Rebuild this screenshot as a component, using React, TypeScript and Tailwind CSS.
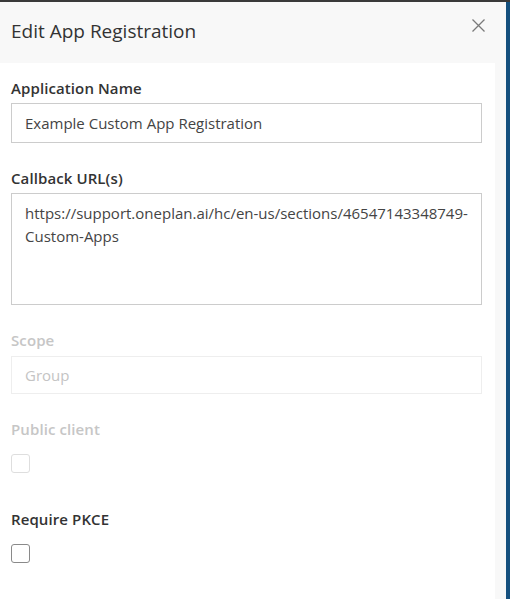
import React from "react";

const font = { fontFamily: '"Open Sans", "Noto Sans", sans-serif' };

function Label({ children, disabled }: { children: React.ReactNode; disabled?: boolean }) {
  return (
    <div
      className={`text-[15px] font-semibold leading-[20px] tracking-[0.1px] ${disabled ? "text-[#c6c6c6]" : "text-[#333333]"}`}
    >
      {children}
    </div>
  );
}

function Checkbox({ disabled }: { disabled?: boolean }) {
  return (
    <div
      className={`w-[19px] h-[19px] rounded-[3px] border-[1.5px] bg-white ${disabled ? "border-[#dedede]" : "border-[#8a8a8a]"}`}
    />
  );
}

export default function App() {
  return (
    <div className="w-[510px] h-[599px] bg-[#3a3a3a] pt-[2px] overflow-hidden" style={font}>
      <div className="flex h-full">
        <div className="flex-1 bg-[#f8f8f8] flex flex-col">
          <div className="h-[61px] flex items-start justify-between pl-[11px] pr-[21px]">
            <h1 className="text-[19px] text-[#333333] mt-[16px] leading-[26px]">
              Edit App Registration
            </h1>
            <button className="mt-[17px] text-[#7a7a7a]" aria-label="Close">
              <svg width="13" height="13" viewBox="0 0 13 13" fill="none" stroke="currentColor" strokeWidth="1.3">
                <path d="M0.5 0.5 L12.5 12.5 M12.5 0.5 L0.5 12.5" />
              </svg>
            </button>
          </div>
          <div className="flex-1 flex">
            <div className="w-[495px] bg-white pl-[11px] pr-[13px] pt-[15px] flex flex-col">
              <Label>Application Name</Label>
              <div className="mt-[5px] h-[40px] border border-[#cccccc] flex items-center px-[13px] text-[15px] text-[#444444]">
                Example Custom App Registration
              </div>

              <div className="mt-[25px]">
                <Label>Callback URL(s)</Label>
              </div>
              <div className="mt-[5px] h-[112px] border border-[#cccccc] px-[13px] pt-[8px] text-[15px] leading-[23px] text-[#444444]">
                <span className="block">https://support.oneplan.ai/hc/en-us/sections/46547143348749-</span>
                <span className="block">Custom-Apps</span>
              </div>

              <div className="mt-[25px]">
                <Label disabled>Scope</Label>
              </div>
              <div className="mt-[6px] h-[38px] border border-[#eeeeee] flex items-center px-[13px] text-[15px] text-[#c4c4c4]">
                Group
              </div>

              <div className="mt-[25px]">
                <Label disabled>Public client</Label>
              </div>
              <div className="mt-[15px]">
                <Checkbox disabled />
              </div>

              <div className="mt-[36px]">
                <Label>Require PKCE</Label>
              </div>
              <div className="mt-[15px]">
                <Checkbox />
              </div>
            </div>
          </div>
        </div>
        <div className="w-[4px] bg-[#15507e]" />
      </div>
    </div>
  );
}
